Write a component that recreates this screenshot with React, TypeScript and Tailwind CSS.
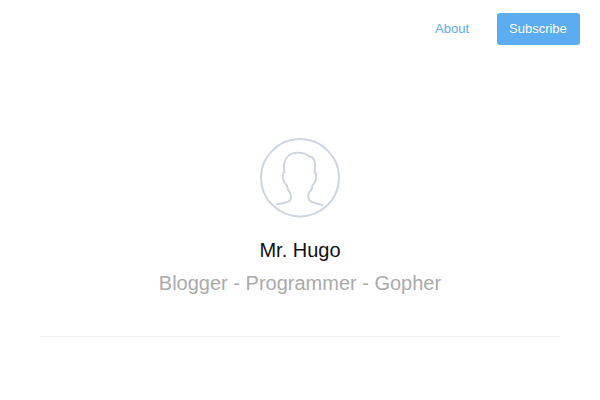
export default function App() {
  return (
    <div className="bg-white font-['Liberation_Sans',Arial,sans-serif]">
      <nav className="flex items-center justify-end gap-7 px-5 pt-[13px] text-[13px] leading-5">
        <a href="#about" className="text-[#5aabef]">About</a>
        <a href="#subscribe" className="min-w-[83px] rounded-[3px] bg-[#5cacf0] px-3 py-1.5 text-white">Subscribe</a>
      </nav>
      <header className="mx-10 flex flex-col items-center border-b border-[#f2f2f2] pt-[93px] pb-[39px] text-center text-xl">
        <svg viewBox="0 0 80 80" className="size-20" fill="none" stroke="#ced5de" strokeWidth="2" strokeLinecap="round" strokeLinejoin="round" role="img" aria-label="Avatar">
          <ellipse cx="40" cy="39.7" rx="39" ry="38.7" />
          <path d="M17 66.3C23 65 28 64.5 30 62.5C31.5 60 31 57 30 54.5C28.5 53 27 50.5 26.8 47.3C23.5 45 22.8 41 22.8 37.5C22.8 35.5 23 34.8 24.5 34.5C23.8 32 24 29 24 27C25 18.5 31 14.8 38 14.8C42.5 14.8 46 16 49 18.2C53 19 55 22 55 26C55 29 55 32 54.5 34.5C56 34.8 56.4 35.5 56.3 37.5C56 42 55 45 52.5 47.3C52.3 50.5 51 53 49 54.5C48 57 48 60 49.5 62.3C52 64.5 57 66 62.5 67" />
        </svg>
        <h1 className="mt-[18px] text-[#111]">Mr. Hugo</h1>
        <h2 className="mt-[5px] text-[#aaa]">Blogger - Programmer - Gopher</h2>
      </header>
    </div>
  );
}
